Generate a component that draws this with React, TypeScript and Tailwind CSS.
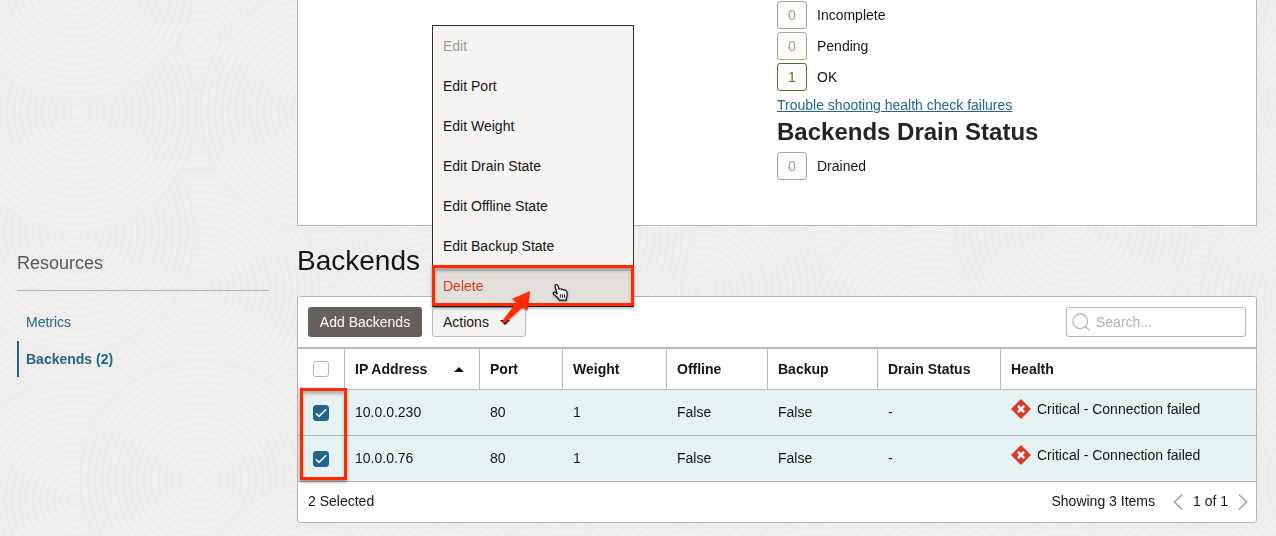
import { useState } from "react";

type Swirl = [cx: number, cy: number];

// Drawn in order: later discs overlap earlier ones.
const SWIRLS: Swirl[] = [
  [200, 40], [200, 210], [460, 230], [-40, 290], [320, 260],
  [200, 290], [75, 500], [200, 480], [320, 600], [-40, 115],
  [75, 232], [77, 112], [320, 110], [75, -20], [440, 340],
  [823, 295], [703, 290], [570, 235], [930, 330], [1195, 290],
  [1075, 225], [1190, 480], [1320, 300], [1310, 100], [1200, -10],
  [1330, 480], [445, 600], [565, 640], [690, 600], [815, 640],
  [940, 600], [1065, 640], [1190, 600],
];
const RINGS = [119, 112, 105, 98, 91, 84, 77, 70, 63, 56, 49, 42, 35, 28, 21, 14, 7];

function Backdrop() {
  return (
    <svg aria-hidden="true" className="pointer-events-none fixed inset-0 -z-10 h-full w-full bg-[#f0efed]">
      {SWIRLS.map(([cx, cy], i) => (
        <g key={i} fill="#f0efed" stroke="#eeeceb" strokeWidth="3">
          {RINGS.map((r) => (
            <circle key={r} cx={cx} cy={cy} r={r} />
          ))}
        </g>
      ))}
    </svg>
  );
}

function Count({ value, label, ok = false }: { value: number; label: string; ok?: boolean }) {
  return (
    <div className="flex items-center gap-2.5">
      <span
        className={
          ok
            ? "flex h-7 w-[30px] items-center justify-center rounded-[3px] border border-[#3f7d14] bg-[#fcfbfa] text-[#3f7d14]"
            : "flex h-7 w-[30px] items-center justify-center rounded-[3px] border border-[#aba49d] bg-[#fcfbfa] text-[#a19b95]"
        }
      >
        {value}
      </span>
      <span>{label}</span>
    </div>
  );
}

function Tick({ label, checked, onChange }: { label: string; checked: boolean; onChange: (v: boolean) => void }) {
  return (
    <label className="mx-auto grid size-4">
      <input
        type="checkbox"
        aria-label={label}
        checked={checked}
        onChange={(e) => onChange(e.target.checked)}
        className="col-start-1 row-start-1 size-4 appearance-none rounded-[3px] border border-[#aeb5c0] bg-white checked:border-[#22678a] checked:bg-[#22678a]"
      />
      {checked && (
        <svg viewBox="0 0 16 16" className="pointer-events-none col-start-1 row-start-1 size-4" fill="none" stroke="#fff" strokeWidth="1.5">
          <path d="M2.8 8.2 6 11.4 13.2 4.2" />
        </svg>
      )}
    </label>
  );
}

function Critical() {
  return (
    <svg viewBox="0 0 20 20" className="size-5" aria-hidden="true">
      <path d="M10 0 20 10 10 20 0 10Z" fill="#d63b25" />
      <path d="M6.9 6.9 13.1 13.1M13.1 6.9 6.9 13.1" stroke="#fff" strokeWidth="2.5" />
    </svg>
  );
}

function HandCursor() {
  return (
    <svg viewBox="0 0 18 19" className="absolute top-[17px] left-[119px] h-[19px] w-[18px] drop-shadow-[0_1px_1px_rgba(0,0,0,0.4)]" aria-hidden="true">
      <path
        d="M5.2 11 4 6.6 3.2 3.6C2.9 2.4 3.4 1.6 4.2 1.5 5 1.4 5.6 1.8 5.9 2.7L7.2 6.4C7.5 5.5 9.3 5.5 9.7 6.8 10.3 6 11.8 6.1 12.2 7.4 13 6.8 14.4 7.2 14.7 8.6L15.2 11.2C15.4 12.8 14.9 13.6 14.5 14.6L14.3 17.2H7.4C7.2 15.9 5.6 14.6 4.4 13.4L1.7 11.2C.9 10.4 1.3 9.4 2.2 9.2 3.3 9 4.3 9.9 5.2 11Z"
        fill="#fff"
        stroke="#111"
        strokeWidth="1.2"
        strokeLinejoin="round"
      />
      <path d="M8.3 11.2V14.8M10.5 11.2V14.8M12.6 11.2V14.8" stroke="#111" strokeWidth="1" />
    </svg>
  );
}

const MENU = ["Edit", "Edit Port", "Edit Weight", "Edit Drain State", "Edit Offline State", "Edit Backup State"];

function ActionsMenu() {
  return (
    <div className="relative">
      <button
        type="button"
        aria-haspopup="menu"
        aria-expanded="true"
        className="flex h-[30px] w-[94px] items-center justify-between rounded-[3px] border border-[#b6bbc6] bg-[#f5f4f2] pr-[15px] pl-2.5"
      >
        Actions
        <svg viewBox="0 0 10 5" className="h-[5px] w-2.5" aria-hidden="true">
          <path d="M0 0H10L5 5Z" fill="#161513" />
        </svg>
      </button>
      <div role="menu" className="absolute bottom-full left-0 z-10 flex w-[202px] flex-col border border-[#312d2a] bg-[#f5f4f2]">
        {MENU.map((item) => (
          <button
            key={item}
            type="button"
            role="menuitem"
            disabled={item === "Edit"}
            className="h-10 px-2.5 text-left disabled:text-[#9b9996]"
          >
            {item}
          </button>
        ))}
        <div className="relative">
          <button type="button" role="menuitem" className="h-10 w-full bg-[#e3e0db] px-2.5 text-left text-[#d63b25]">
            Delete
          </button>
          <span className="pointer-events-none absolute -inset-x-px -top-px bottom-0 border-[3px] border-[#ff2a00] shadow-[0_2px_3px_rgba(0,0,0,0.4),inset_0_3px_3px_rgba(0,0,0,0.3)]" />
          <HandCursor />
        </div>
      </div>
      <svg viewBox="0 0 36 40" className="pointer-events-none absolute -top-5 left-[66px] z-20 h-10 w-9 drop-shadow-[0_1px_1px_rgba(0,0,0,0.4)]" aria-hidden="true">
        <path d="M32 4 14 12 18.5 15.3 4.2 34.2Q4.6 36.6 7.2 36L24.8 19.9 29.5 23.5Z" fill="#ff2a00" />
      </svg>
    </div>
  );
}

const COLUMNS = ["Port", "Weight", "Offline", "Backup", "Drain Status", "Health"];
const BACKENDS = [
  { ip: "10.0.0.230", cells: ["80", "1", "False", "False", "-"], health: "Critical - Connection failed" },
  { ip: "10.0.0.76", cells: ["80", "1", "False", "False", "-"], health: "Critical - Connection failed" },
];

function BackendsTable() {
  const [selected, setSelected] = useState([true, true]);
  const count = selected.filter(Boolean).length;
  return (
    <div className="rounded-[3px] border border-[#b9b4ae] bg-white">
      <div className="flex items-center gap-2.5 border-b-2 border-[#b7b8ba] p-2.5">
        <button type="button" className="h-[30px] w-[114px] rounded-[3px] bg-[#665f5b] text-white">
          Add Backends
        </button>
        <ActionsMenu />
        <label className="ml-auto flex h-[30px] w-[180px] items-center gap-1.5 rounded-[3px] border border-[#b9b4ae] bg-white px-[5px]">
          <svg viewBox="0 0 18 18" className="size-[18px] shrink-0" fill="none" stroke="#a8a8a8" strokeWidth="1.1" aria-hidden="true">
            <circle cx="8.2" cy="8.2" r="7.3" />
            <path d="M13.2 13.2 17.6 17.6" />
          </svg>
          <input
            type="text"
            aria-label="Search"
            placeholder="Search..."
            className="w-full min-w-0 bg-transparent outline-none placeholder:text-[#aeaeae]"
          />
        </label>
      </div>

      <div className="relative">
        <table className="w-full table-fixed border-separate border-spacing-0 text-left">
          <colgroup>
            <col className="w-[47px]" />
            <col className="w-[135px]" />
            <col className="w-[83px]" />
            <col className="w-[104px]" />
            <col className="w-[101px]" />
            <col className="w-[110px]" />
            <col className="w-[123px]" />
            <col />
          </colgroup>
          <thead>
            <tr className="h-[41px]">
              <th className="border-r border-b border-[#b6bbc3] p-0">
                <Tick label="Select all backends" checked={false} onChange={() => setSelected([true, true])} />
              </th>
              <th className="border-r border-b border-[#b6bbc3] py-0 pr-[15px] pl-2.5">
                <button type="button" className="flex w-full items-center justify-between font-bold">
                  IP Address
                  <svg viewBox="0 0 10 5" className="h-[5px] w-2.5" aria-hidden="true">
                    <path d="M0 5H10L5 0Z" fill="#161513" />
                  </svg>
                </button>
              </th>
              {COLUMNS.map((name) => (
                <th key={name} className="border-r border-b border-[#b6bbc3] px-2.5 py-0 last:border-r-0">
                  {name}
                </th>
              ))}
            </tr>
          </thead>
          <tbody>
            {BACKENDS.map((row, i) => (
              <tr key={row.ip} className="h-[46px] bg-[#e6f1f3]">
                <td className="border-b border-[#b5b7b7] py-0 pr-px pl-0">
                  <Tick
                    label={`Select ${row.ip}`}
                    checked={selected[i]}
                    onChange={(v) => setSelected(selected.map((s, n) => (n === i ? v : s)))}
                  />
                </td>
                <td className="border-b border-[#b5b7b7] px-2.5 pt-0 pb-0.5">{row.ip}</td>
                {row.cells.map((cell, n) => (
                  <td key={n} className="border-b border-[#b5b7b7] px-2.5 pt-0 pb-0.5">
                    {cell}
                  </td>
                ))}
                <td className="border-b border-[#b5b7b7] px-2.5 pt-[9px] pb-0 align-top">
                  <span className="flex items-center gap-1.5">
                    <Critical />
                    {row.health}
                  </span>
                </td>
              </tr>
            ))}
          </tbody>
        </table>
        <span className="pointer-events-none absolute top-[39px] left-[2px] h-[92px] w-[47px] border-[3px] border-[#ff2a00] shadow-[0_2px_3px_rgba(0,0,0,0.4),inset_0_3px_3px_rgba(0,0,0,0.25)]" />
      </div>

      <div className="flex h-10 items-center pr-2 pb-0.5 pl-2.5">
        <span>{count} Selected</span>
        <span className="ml-auto">Showing 3 Items</span>
        <button type="button" aria-label="Previous page" className="mr-2.5 ml-[18px] pt-0.5">
          <svg viewBox="0 0 10 16" className="h-4 w-2.5" fill="none" stroke="#a5a5a5" strokeWidth="1.6">
            <path d="M9.2.5 1.4 8 9.2 15.5" />
          </svg>
        </button>
        <span>1 of 1</span>
        <button type="button" aria-label="Next page" className="ml-2.5 pt-0.5">
          <svg viewBox="0 0 10 16" className="h-4 w-2.5" fill="none" stroke="#a5a5a5" strokeWidth="1.6">
            <path d="M.8.5 8.6 8 .8 15.5" />
          </svg>
        </button>
      </div>
    </div>
  );
}

export default function App() {
  return (
    <div className="relative isolate flex min-h-screen gap-7 pr-[19px] pl-[17px] font-['Liberation_Sans',Arial,sans-serif] text-sm text-[#161513]">
      <Backdrop />
      <nav aria-label="Resources" className="w-[252px] shrink-0 pt-[249px]">
        <h2 className="border-b border-[#a9b4c6] pb-[13px] text-lg leading-7 font-light text-[#5a5856]">Resources</h2>
        <ul className="mt-[13px] flex flex-col gap-px text-[#22678a]">
          <li>
            <a href="#metrics" className="flex h-9 items-center border-l-2 border-transparent pl-[7px]">
              Metrics
            </a>
          </li>
          <li>
            <a href="#backends" aria-current="page" className="flex h-9 items-center border-l-2 border-[#22678a] pl-[7px] font-bold">
              Backends (2)
            </a>
          </li>
        </ul>
      </nav>

      <main className="min-w-0 flex-1">
        <section className="grid grid-cols-2 border border-t-0 border-[#b3b9c2] bg-white pt-px pb-[45px]">
          <div className="col-start-2">
            <div className="flex flex-col gap-[3px]">
              <Count value={0} label="Incomplete" />
              <Count value={0} label="Pending" />
              <Count value={1} label="OK" ok />
            </div>
            <a href="#troubleshooting" className="mt-1 block text-[#22678a] underline">
              Trouble shooting health check failures
            </a>
            <h3 className="mt-px mb-1 text-2xl leading-8 font-bold text-[#242424]">Backends Drain Status</h3>
            <Count value={0} label="Drained" />
          </div>
        </section>

        <h1 className="mt-[17px] mb-[17px] text-[28px] leading-9">Backends</h1>
        <BackendsTable />
      </main>
    </div>
  );
}
